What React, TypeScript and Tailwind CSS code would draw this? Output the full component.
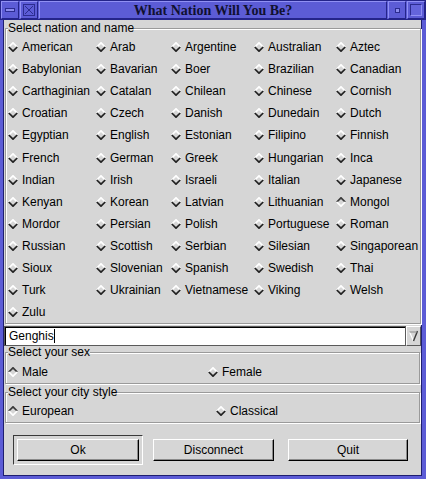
import React from "react";

const nations = [
  "American","Arab","Argentine","Australian","Aztec",
  "Babylonian","Bavarian","Boer","Brazilian","Canadian",
  "Carthaginian","Catalan","Chilean","Chinese","Cornish",
  "Croatian","Czech","Danish","Dunedain","Dutch",
  "Egyptian","English","Estonian","Filipino","Finnish",
  "French","German","Greek","Hungarian","Inca",
  "Indian","Irish","Israeli","Italian","Japanese",
  "Kenyan","Korean","Latvian","Lithuanian","Mongol",
  "Mordor","Persian","Polish","Portuguese","Roman",
  "Russian","Scottish","Serbian","Silesian","Singaporean",
  "Sioux","Slovenian","Spanish","Swedish","Thai",
  "Turk","Ukrainian","Vietnamese","Viking","Welsh",
  "Zulu",
];

function Diamond({ on }: { on?: boolean }) {
  return (
    <svg width="10" height="10" viewBox="0 0 10 10" className="shrink-0">
      <polyline points="0.8,5 5,0.8 9.2,5" fill="none" stroke={on ? "#3a3a3a" : "#ffffff"} strokeWidth="1.7" />
      <polyline points="0.8,5 5,9.2 9.2,5" fill="none" stroke={on ? "#ffffff" : "#222222"} strokeWidth="1.7" />
    </svg>
  );
}

function Radio({ label, on }: { label: string; on?: boolean }) {
  return (
    <div className="flex items-center gap-[4px] whitespace-nowrap">
      <Diamond on={on} />
      <span>{label}</span>
    </div>
  );
}

const frame =
  "mx-[1px] border border-[#9a9a9a] shadow-[inset_1px_1px_0_#ffffff,1px_1px_0_#ffffff] pl-[2px] pr-[2px]";
const legend = "bg-[#d6d6d6] leading-[12px] px-0";

function TitleBtn({ children }: { children?: React.ReactNode }) {
  return (
    <div className="w-[18px] h-[18px] flex items-center justify-center bg-[#5c5cd6] border border-t-[#9090f4] border-l-[#9090f4] border-b-[#24248a] border-r-[#24248a]">
      {children}
    </div>
  );
}

function Button({ label }: { label: string }) {
  return (
    <div className="h-[22px] w-full flex items-center justify-center bg-[#d6d6d6] border border-t-white border-l-white border-b-black border-r-black shadow-[inset_-1px_-1px_0_#8a8a8a]">
      {label}
    </div>
  );
}

export default function App() {
  return (
    <div
      className="w-[426px] h-[479px] bg-[#5c5cd6] flex flex-col text-[12px] text-black"
      style={{ fontFamily: '"Liberation Sans", Arial, sans-serif' }}
    >
      {/* Title bar */}
      <div className="h-[20px] flex items-stretch border border-[#24248a] gap-[1px]">
        <TitleBtn>
          <div className="w-[10px] h-[4px] bg-[#8c8cee] border border-[#2c2c90]" />
        </TitleBtn>
        <TitleBtn>
          <svg width="12" height="12" viewBox="0 0 12 12">
            <rect x="0.5" y="0.5" width="11" height="11" fill="none" stroke="#2c2c90" />
            <path d="M2 2 L10 10 M10 2 L2 10" stroke="#2c2c90" strokeWidth="1" />
          </svg>
        </TitleBtn>
        <div
          className="flex-1 flex items-center justify-center bg-[#5c5cd6] border border-t-[#9090f4] border-l-[#9090f4] border-b-[#24248a] border-r-[#24248a] text-[14px] font-bold text-[#101030]"
          style={{ fontFamily: '"Liberation Serif", "Times New Roman", serif' }}
        >
          What Nation Will You Be?
        </div>
        <TitleBtn>
          <div className="w-[5px] h-[5px] bg-[#8c8cee] border border-[#2c2c90]" />
        </TitleBtn>
        <TitleBtn>
          <div className="w-[12px] h-[12px] border border-t-[#2c2c90] border-l-[#2c2c90] border-b-[#9090f4] border-r-[#9090f4] bg-[#6464dc]" />
        </TitleBtn>
      </div>

      {/* Body */}
      <div className="ml-[3px] mr-[4px] mb-[3px] flex-1 border-l border-r border-b border-[#1e1e70] bg-[#d6d6d6] flex flex-col">
        <fieldset className={`${frame} mt-[1px]`}>
          <legend className={`${legend} leading-[14px]`}>Select nation and name</legend>
          <div className="grid grid-cols-[88px_75px_83px_82px_1fr] auto-rows-[22.1px] items-center pt-[1px]">
            {nations.map((n) => (
              <Radio key={n} label={n} on={n === "Mongol"} />
            ))}
          </div>
        </fieldset>

        <div className="mt-[2px] h-[20px] flex">
          <div className="flex-1 bg-white border border-[#5a5a5a] shadow-[inset_1px_1px_0_#000000] flex items-center pl-[4px]">
            <span>Genghis</span>
            <span className="w-[1px] h-[14px] bg-black" />
          </div>
          <div className="w-[15px] bg-[#d6d6d6] border border-t-white border-l-white border-b-[#5a5a5a] border-r-[#5a5a5a] flex items-center justify-center">
            <svg width="9" height="12" viewBox="0 0 9 12">
              <path d="M0.5 2 L4.5 11" stroke="#ffffff" strokeWidth="1.2" fill="none" />
              <path d="M8.5 1 L4.5 11" stroke="#3a3a3a" strokeWidth="1.4" fill="none" />
              <path d="M0.5 2 L8.5 2" stroke="#8a8a8a" strokeWidth="1" fill="none" />
            </svg>
          </div>
        </div>

        <fieldset className={frame}>
          <legend className={legend}>Select your sex</legend>
          <div className="h-[25px] pt-[2px] flex items-center">
            <div className="w-[200px]">
              <Radio label="Male" on />
            </div>
            <Radio label="Female" />
          </div>
        </fieldset>

        <fieldset className={`${frame} mt-[2px]`}>
          <legend className={legend}>Select your city style</legend>
          <div className="h-[24px] pt-[1px] flex items-center">
            <div className="w-[208px]">
              <Radio label="European" on />
            </div>
            <Radio label="Classical" />
          </div>
        </fieldset>

        <div className="flex-1 flex items-start pt-[12px] pl-[9px]">
          <div className="w-[130px] h-[30px] flex items-center px-[3px] border border-t-[#3a3a3a] border-l-[#3a3a3a] border-b-white border-r-white">
            <Button label="Ok" />
          </div>
          <div className="w-[121px] ml-[10px] h-[30px] flex items-center">
            <Button label="Disconnect" />
          </div>
          <div className="w-[120px] ml-[14px] h-[30px] flex items-center">
            <Button label="Quit" />
          </div>
        </div>
      </div>
    </div>
  );
}
